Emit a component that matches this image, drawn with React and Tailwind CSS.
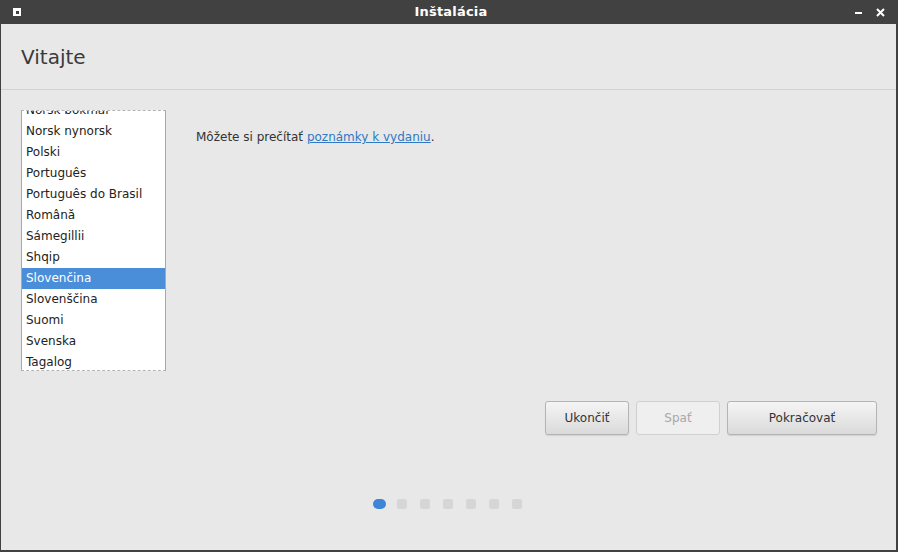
import React from "react";

const langs = [
  "Norsk bokmål",
  "Norsk nynorsk",
  "Polski",
  "Português",
  "Português do Brasil",
  "Română",
  "Sámegillii",
  "Shqip",
  "Slovenčina",
  "Slovenščina",
  "Suomi",
  "Svenska",
  "Tagalog",
];

export default function App() {
  return (
    <div
      className="w-[898px] h-[552px] flex flex-col overflow-hidden"
      style={{ fontFamily: '"DejaVu Sans", "Noto Sans", sans-serif' }}
    >
      {/* title bar */}
      <div className="h-[24px] bg-[#414141] flex items-center px-[13px] text-white shrink-0">
        <div className="w-[8px] h-[8px] bg-white flex items-center justify-center">
          <div className="w-[3px] h-[3px] bg-[#414141]" />
        </div>
        <div className="flex-1 text-center font-bold text-[13px] tracking-[0.2px] pl-[26px]">Inštalácia</div>
        <div className="flex items-center gap-[14px]">
          <div className="w-[7px] h-[2px] bg-white mt-[2px]" />
          <svg width="9" height="9" viewBox="0 0 9 9">
            <path d="M1 1 L8 8 M8 1 L1 8" stroke="white" strokeWidth="2" />
          </svg>
        </div>
      </div>
      {/* body */}
      <div className="flex-1 bg-[#e8e8e8] border-l border-r-2 border-b-2 border-[#414141] flex flex-col">
        <div className="h-[66px] flex items-center px-[20px] border-b border-[#d2d2d2] shrink-0">
          <span className="text-[20px] text-[#3a3a3a] mt-[1px]">Vitajte</span>
        </div>
        <div className="flex pt-[20px] px-[20px]">
          <div className="w-[145px] h-[261px] bg-white border border-solid border-x-[#a8a8a8] border-y-[#b4b4b4] [border-top-style:dashed] [border-bottom-style:dashed] overflow-hidden relative">
            <div className="mt-[-11px]">
              {langs.map((l) => (
                <div
                  key={l}
                  className={
                    l === "Slovenčina"
                      ? "h-[21px] leading-[21px] pl-[4px] text-[12px] bg-[#4a8ed9] text-white"
                      : "h-[21px] leading-[21px] pl-[4px] text-[12px] text-[#222]"
                  }
                >
                  {l}
                </div>
              ))}
            </div>
          </div>
          <div className="pl-[30px] pt-[18px] text-[12px] text-[#333]">
            Môžete si prečítať{" "}
            <span className="text-[#2f78c4] underline">poznámky k vydaniu</span>.
          </div>
        </div>
        <div className="flex justify-end gap-[7px] px-[19px] mt-[30px]">
          <button className="w-[84px] h-[34px] rounded-[3px] border border-[#b4b4b4] bg-gradient-to-b from-[#f5f5f5] to-[#dadada] text-[12px] text-[#333] shadow-[0_1px_1px_rgba(0,0,0,0.1)]">
            Ukončiť
          </button>
          <button className="w-[84px] h-[34px] rounded-[3px] border border-[#d0d0d0] bg-[#efefef] text-[12px] text-[#a8a8a8]">
            Spať
          </button>
          <button className="w-[150px] h-[34px] rounded-[3px] border border-[#b4b4b4] bg-gradient-to-b from-[#f5f5f5] to-[#dadada] text-[12px] text-[#333] shadow-[0_1px_1px_rgba(0,0,0,0.1)]">
            Pokračovať
          </button>
        </div>
        <div className="flex justify-center items-center mt-[64px] pr-[3px]">
          <div className="w-[13px] h-[10px] rounded-[5px] bg-[#3d85d6] mr-[11px]" />
          <div className="flex gap-[13px]">
            {[0, 1, 2, 3, 4, 5].map((i) => (
              <div key={i} className="w-[10px] h-[10px] rounded-[2px] bg-[#d6d6d6]" />
            ))}
          </div>
        </div>
      </div>
    </div>
  );
}
